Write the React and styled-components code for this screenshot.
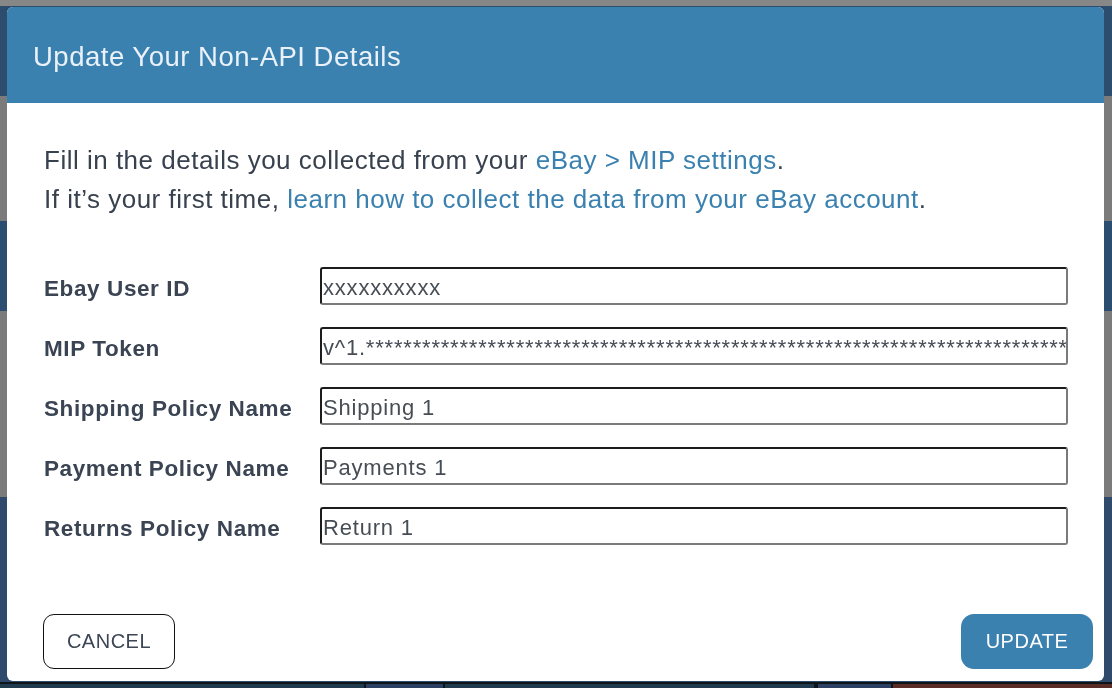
import React, { useState } from "react";
import styled, { createGlobalStyle } from "styled-components";

const GlobalStyle = createGlobalStyle`
  html, body {
    margin: 0;
    padding: 0;
    overflow: hidden;
    font-family: "Liberation Sans", Arial, sans-serif;
  }
`;

const bands = [
  { h: 6, tone: "#878787" },
  { h: 90, tone: "#2c4d6d" },
  { h: 125, tone: "#7a7b7a" },
  { h: 90, tone: "#2b4e70" },
  { h: 186, tone: "#7a7b7a" },
  { h: 185, tone: "#2f4a6a" },
];

const bottomCells = [
  { w: 364, tone: "#203b4e", label: "Change Email" },
  { w: 2, tone: "#0e1418" },
  { w: 77, tone: "#2b4063" },
  { w: 2, tone: "#0e1418" },
  { w: 369, tone: "#203b4e", label: "Change Method" },
  { w: 4, tone: "#0e1418" },
  { w: 73, tone: "#2b4063" },
  { w: 2, tone: "#0e1418" },
  { w: 219, tone: "#5a2c27" },
];

const fields = [
  { label: "Ebay User ID", value: "xxxxxxxxxx" },
  { label: "MIP Token", value: "v^1." + "*".repeat(120) },
  { label: "Shipping Policy Name", value: "Shipping 1" },
  { label: "Payment Policy Name", value: "Payments 1" },
  { label: "Returns Policy Name", value: "Return 1" },
];

const App = () => {
  const [values, setValues] = useState(fields.map((f) => f.value));

  const handleChange = (i, v) => {
    const next = [...values];
    next[i] = v;
    setValues(next);
  };

  return (
    <>
      <GlobalStyle />
      <Backdrop>
        {bands.map((b, i) => (
          <Band key={i} $h={b.h} $tone={b.tone} />
        ))}
        <BottomLine />
        <BottomBar>
          {bottomCells.map((c, i) => (
            <BottomCell key={i} $w={c.w} $tone={c.tone}>
              {c.label}
            </BottomCell>
          ))}
        </BottomBar>
      </Backdrop>

      <Modal>
        <Header>
          <Title>Update Your Non-API Details</Title>
        </Header>
        <Body>
          <Intro>
            Fill in the details you collected from your{" "}
            <Link href="#">eBay &gt; MIP settings</Link>.
            <br />
            If it’s your first time,{" "}
            <Link href="#">learn how to collect the data from your eBay account</Link>.
          </Intro>
          <Form>
            {fields.map((f, i) => (
              <React.Fragment key={f.label}>
                <Label>{f.label}</Label>
                <Input
                  type="text"
                  value={values[i]}
                  onChange={(e) => handleChange(i, e.target.value)}
                />
              </React.Fragment>
            ))}
          </Form>
        </Body>
        <Footer>
          <Button>CANCEL</Button>
          <Button $primary>UPDATE</Button>
        </Footer>
      </Modal>
    </>
  );
};

const Backdrop = styled.div`
  height: 100vh;
  display: flex;
  flex-direction: column;
  overflow: hidden;
`;

const Band = styled.div`
  height: ${(p) => p.$h}px;
  flex-shrink: 0;
  background: ${(p) => p.$tone};
`;

const BottomLine = styled.div`
  height: 2px;
  flex-shrink: 0;
  background: #0e1418;
`;

const BottomBar = styled.div`
  flex: 1;
  display: flex;
`;

const BottomCell = styled.div`
  width: ${(p) => p.$w}px;
  flex-shrink: 0;
  background: ${(p) => p.$tone};
  color: #7f8e98;
  font-size: 22px;
  line-height: 26px;
  padding: 3px 0 0 ${(p) => (p.$w > 300 ? 112 : 0)}px;
  white-space: nowrap;
  overflow: hidden;
  box-sizing: border-box;
`;

const Modal = styled.div`
  position: fixed;
  top: 7px;
  left: 7px;
  width: 1097px;
  height: 674px;
  background: #ffffff;
  border-radius: 6px;
  display: flex;
  flex-direction: column;
  overflow: hidden;
`;

const Header = styled.div`
  height: 96px;
  flex-shrink: 0;
  background: #3a81b0;
  display: flex;
  align-items: center;
  padding-left: 26px;
`;

const Title = styled.h2`
  margin: 0;
  font-size: 27.5px;
  font-weight: 400;
  letter-spacing: 0.5px;
  color: #eaf1f8;
  padding-top: 4px;
`;

const Body = styled.div`
  padding: 38px 36px 0 37px;
`;

const Intro = styled.p`
  margin: 0;
  font-size: 26px;
  line-height: 39px;
  letter-spacing: 0.5px;
  color: #38414e;
`;

const Link = styled.a`
  color: #3a81b0;
  text-decoration: none;
`;

const Form = styled.div`
  margin-top: 48px;
  display: grid;
  grid-template-columns: 276px 1fr;
  row-gap: 22px;
  align-items: center;
`;

const Label = styled.label`
  padding-top: 5px;
  font-size: 22.5px;
  font-weight: 700;
  letter-spacing: 0.6px;
  color: #3a4453;
`;

const Input = styled.input`
  height: 38px;
  box-sizing: border-box;
  width: 100%;
  padding: 4px 0 0 1px;
  font-family: "Liberation Sans", Arial, sans-serif;
  font-size: 22px;
  letter-spacing: 0.8px;
  color: #474d55;
  background: #ffffff;
  border-style: solid;
  border-width: 2px;
  border-color: #1c1c1c #7a7a7a #7a7a7a #1c1c1c;
  border-radius: 3px;

  &:focus {
    outline: none;
  }
`;

const Footer = styled.div`
  margin-top: auto;
  display: flex;
  justify-content: space-between;
  align-items: center;
  padding: 0 11px 12px 36px;
`;

const Button = styled.button`
  width: 132px;
  height: 55px;
  box-sizing: border-box;
  font-family: "Liberation Sans", Arial, sans-serif;
  font-size: 20px;
  letter-spacing: 0.5px;
  cursor: pointer;
  border-radius: ${(p) => (p.$primary ? 13 : 11)}px;
  border: ${(p) => (p.$primary ? "none" : "1px solid #111111")};
  background: ${(p) => (p.$primary ? "#3a81b0" : "#ffffff")};
  color: ${(p) => (p.$primary ? "#ffffff" : "#3c4655")};
`;

export default App;
